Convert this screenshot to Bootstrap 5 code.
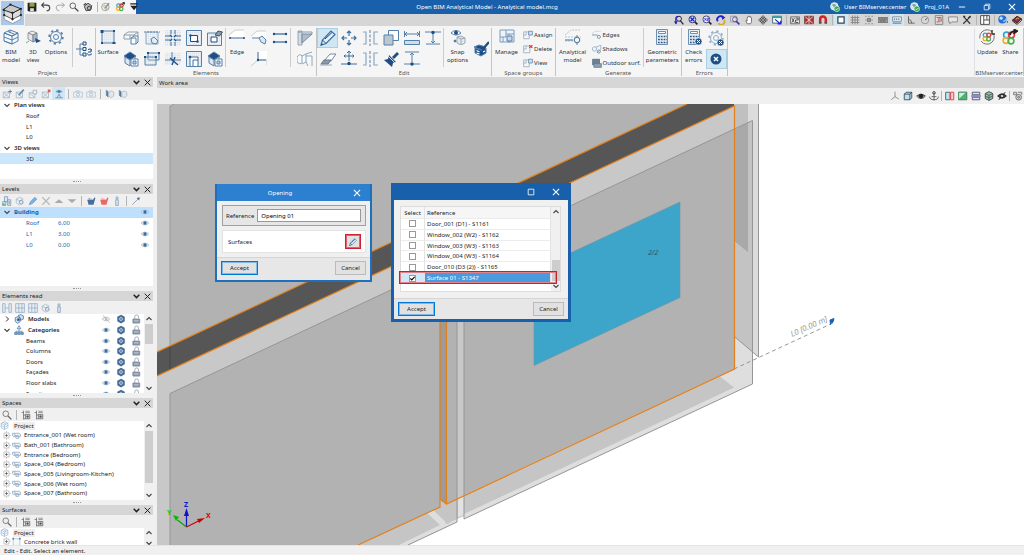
<!DOCTYPE html>
<html lang="en">
<head>
<meta charset="utf-8">
<meta name="viewport" content="width=device-width, initial-scale=1">
<title>Open BIM Analytical Model</title>
<link href="https://cdn.jsdelivr.net/npm/bootstrap@5.3.0/dist/css/bootstrap.min.css" rel="stylesheet">
<style>
:root{--blue:#185fac;--ink:#5580ab;--bar:#d6d6d6;--soft:#f0f0f0}
body{font:6px/8px "Noto Sans","Open Sans",sans-serif;color:#1c1c1c;background:var(--soft);overflow:hidden}
button{font:inherit;color:inherit;background:none;border:0;padding:0}
svg.ic{width:16px;height:16px;fill:none;stroke:var(--ink);stroke-width:1;flex:none;display:block}
svg.sm{width:10px;height:10px;stroke-width:1.5}
.app-btn{width:23px;height:24px;margin:1px;background:#a9c8ec}
.titlebar{height:14px;background:var(--blue);color:#fff}
.quick{width:111px;background:#f4f4f4;padding-right:1px}
.topbar{height:12px;background:var(--bar)}
.ib{display:flex;align-items:center;justify-content:center;flex:none;width:14px;height:12px}
.ib.on,.tool.on{background:#cfe6f3}
.vr-line{width:4px;flex:none;align-self:stretch;background:linear-gradient(#b4b4b4,#b4b4b4) center/1px 10px no-repeat}
.win{width:25px}
.ribbon{height:51px;background:#f5f5f5;color:#333}
.grp{border-right:1px solid #c4c4c4;margin:2px 0 1px}
.grp-body{height:41px}
.grp-name{height:8px;text-align:center;color:#555;white-space:nowrap}
.big{display:flex;flex-direction:column;align-items:center;text-align:center;height:40px;padding-top:1px;flex:none;white-space:nowrap}
.big svg{margin-bottom:3px}
.tool{display:flex;align-items:center;justify-content:center;width:21px;height:20px;flex:none}
.tool.on{outline:1px solid #a9cfe4;outline-offset:-1px}
.tools{display:grid;grid-auto-rows:21px;align-content:start}
.t6{grid-template-columns:repeat(6,21px)}.t5{grid-template-columns:repeat(5,21px)}
.t2{grid-template-columns:repeat(2,21px)}.t1{grid-template-columns:21px}
.cut{width:1px;background:#ccc;height:39px;flex:none}
.w20{width:20px}.w22{width:22px}.w24{width:24px}.w27{width:27px}.w29{width:29px}.w34{width:34px}.w37{width:37px}
.lines{padding:0 2px;white-space:nowrap}
.lines button{display:flex;align-items:center;gap:1px;height:14px}
.lines svg.sm,.side svg.sm{stroke-width:1.2}
.side{width:153px;margin-right:4px;background:var(--soft)}
.phead{height:10px;background:var(--bar);padding-left:2px}
.phead h2,.work-head h2{font:inherit;margin:0}
.phead .ib{width:11px;height:10px}
.phead .ib svg.sm{width:9px;height:9px}
.ptools{height:13px}
.ptools .ib{width:13px;height:13px}
.ptools .vr-line{width:6px}
.ptools svg.sm{opacity:.8}
.tree{background:#fff;overflow:hidden}
.rows{display:grid;grid-auto-rows:1fr}
.rows>div{display:flex;align-items:center;white-space:nowrap;min-height:0}
.views-rows{height:64px}.level-rows{height:43px}.elem-rows{height:85px}.space-rows{height:77px}.surf-rows{height:18px}
.h-panel{height:79px}
.twist{width:14px;display:flex;justify-content:center;flex:none}
.twist svg.sm{width:8px;height:8px}
.row-on{background:#cce6fc}.row-bld{background:#bfe0fd}
.leaf{padding-left:26px}
.num{width:32px}
.grip{height:5px;display:flex;align-items:center;justify-content:center}
.grip::after{content:"";width:8px;border-top:1px dotted #999}
.eyes{display:flex;gap:5px;margin-left:auto;padding-right:3px}
.sp{padding-left:2px;gap:3px}.sp svg:first-child{margin-right:-2px}
.space-rows svg.sm,.surf-rows svg.sm{width:9px;height:9px}
.sbar{width:9px;background:var(--soft);display:flex;flex-direction:column;align-items:center;flex:none}
.sbar svg.sm{width:8px;height:8px;margin:1px 0}
.thumb{width:8px;background:#cdcdcd}
.proj-name{background:#eee;padding:0 1px}
.bx{color:var(--blue)}
.work-head{height:11px;background:var(--bar);padding-left:2px}
.work-tools{height:16px}
.work-tools .ib{width:13px}
.work-tools .vr-line{width:3px}
.canvas{background:#fff;overflow:hidden;position:relative}
.scene{position:absolute;inset:0;width:100%;height:100%}
.status{height:10px;padding-left:4px;border-top:1px solid #e4e4e4}
.dlg{position:absolute;border:solid var(--frame);border-width:0 3px 3px;background:var(--soft);display:flex;flex-direction:column}
.dlg-open{--frame:#1f6fbd;left:58px;top:80px;width:157px;height:98px;border-width:0 2px 2px}
.dlg-pick{--frame:#185fac;left:234px;top:79px;width:180px;height:139px}
.dlg-title{height:17px;color:#fff;flex:none}
.dlg-open .dlg-title{background:#2d7fcf}
.dlg-pick .dlg-title{background:#185fac}
.dlg-foot{background:#e7e7e7;border-top:1px solid #d5d5d5;padding:3px 4px 0}
.dbtn{height:14px;width:31px;background:#e1e1e1;border:1px solid #bbb}
.dbtn.ok{width:37px;border:1px solid #0078d7;outline:1px solid #7fb8ea;outline-offset:-2px}
.refbox{height:21px;border:1px solid #a0a0a0;background:#e6e6e6;margin:4px 4px 4px 5px;padding:0 4px 0 3px;gap:3px}
.refbox input{height:13px;width:105px;border:1px solid #999;border-radius:0;background:#fff;font:inherit;padding:0 3px;min-height:0}
.surfbox{height:23px;background:#fff;border:1px solid #e3e3e3;margin:0 4px 4px 5px;padding:0 4px 0 5px}
.redbtn{width:16px;height:15px;border:1px solid #d0202e;outline:1px solid #e4606a;outline-offset:-2px;background:#e1e1e1;display:flex;align-items:center;justify-content:center}
.redbtn svg.sm{width:8px;height:8px}
.listbox{height:86px;margin:6px 7px 6px 6px;border:1px solid #ddd;background:#fff;position:relative}
.pick{width:151px;margin:0;align-self:flex-start;line-height:8px;border-collapse:separate;border-spacing:0;height:77px}
.pick th{font-weight:400;background:#f6f6f6;height:12px}
.pick th,.pick td{padding:0 2px;border-right:1px solid #e2e2e2;border-bottom:1px solid #ececec;white-space:nowrap}
.pick th:first-child,.pick td:first-child{width:24px;text-align:center}
.pick .sel td{background:#4a9ae0;color:#fff}
.pick .sel td:first-child{background:#cfe7fb}
.pick input{appearance:none;width:7px;height:7px;border:1px solid #999;background:#fff;display:block;margin:0 auto}
.pick input:checked{background:#fff url("data:image/svg+xml,%3Csvg xmlns='http://www.w3.org/2000/svg' viewBox='0 0 7 7'%3E%3Cpath d='M1 3.5 2.7 5.2 6 1.5' fill='none' stroke='%23000' stroke-width='1.4'/%3E%3C/svg%3E") center/6px}
.mark-red{position:absolute;left:-2px;right:3px;top:64px;height:13px;border:1px solid #c9202e;outline:1px solid #e58088;outline-offset:-2px;pointer-events:none}
</style>
</head>
<body class="vh-100 d-flex flex-column">

<svg width="0" height="0" class="position-absolute" aria-hidden="true">
<defs>
<pattern id="grid" width="2" height="2" patternUnits="userSpaceOnUse"><path d="M0 0h2M0 0v2" stroke="#c3d3e4" stroke-width=".6"/></pattern>
<symbol id="app" viewBox="0 0 22 22"><path d="M3 13v4l8 4 8-4v-4l-8 3z" fill="#fff" stroke="#777" stroke-width=".6"/><path d="M3 7v6l8 4 8-4V7l-8 4z" fill="#ddd" stroke="#333" stroke-width=".7"/><path d="M2 8 9 3l10 4-8 4z" fill="#c8c8c8" stroke="#222" stroke-width=".9"/><path d="M11 11v6" stroke="#333"/><g fill="#222" stroke="none"><circle cx="2.500" cy="8" r="1.100"/><circle cx="9" cy="3" r="1.100"/><circle cx="19" cy="7" r="1.100"/><circle cx="11" cy="11" r="1.100"/><circle cx="3" cy="13" r="1.100"/><circle cx="11" cy="17" r="1.100"/><circle cx="19" cy="13" r="1.100"/></g></symbol>
<symbol id="save" viewBox="0 0 16 16"><path d="M1 1h14v14H3l-2-2z" fill="#222" stroke="none"/><path d="M4 1.500h8v6H4z" fill="#9a9a3a" stroke="none"/><path d="M5 10h6v5H5z" fill="#ddd" stroke="none"/></symbol>
<symbol id="undo" viewBox="0 0 16 16"><path d="M5 1 1 5l4 4M1 5h8c4 0 5 2 5 4.500S12 14 9 14" stroke="#444" stroke-width="1.700"/></symbol>
<symbol id="redo" viewBox="0 0 16 16"><path d="m11 1 4 4-4 4M15 5H7C3 5 2 7 2 9.500S4 14 7 14" stroke="#999" stroke-width="1.400"/></symbol>
<symbol id="find" viewBox="0 0 16 16"><circle cx="6" cy="6" r="4.500" stroke="#555" stroke-width="1.400"/><path d="m9.500 9.500 5.500 5.500" stroke="#444" stroke-width="2.200"/></symbol>
<symbol id="print" viewBox="0 0 16 16"><path d="M2 7 8 2l6 4-2 7-7 1z" fill="#bbb" stroke="#444" stroke-width="1.500"/><circle cx="10" cy="10" r="3" stroke="#333" stroke-width="1.500"/><path d="M1 5l4-3" stroke="#444" stroke-width="2"/></symbol>
<symbol id="sync" viewBox="0 0 16 16"><circle cx="7" cy="8" r="6" stroke="#999" stroke-width="1.400"/><path d="m7 9 6-7" stroke="#888" stroke-width="2"/><circle cx="6" cy="7" r="1.800" stroke="#e96"/><circle cx="8" cy="10" r="1.800" stroke="#5b7"/></symbol>
<symbol id="rings" viewBox="0 0 16 16"><g stroke-width="2"><circle cx="5.500" cy="5.500" r="2.700" stroke="#2aa5d8"/><circle cx="10.500" cy="5.500" r="2.700" stroke="#e23b3b"/><circle cx="5" cy="10.500" r="2.700" stroke="#f2b01e"/><circle cx="10" cy="11" r="2.700" stroke="#4caf50"/></g><path d="m10 5 5-4M12 1h3v3" stroke="#222" stroke-width="1.500"/></symbol>
<symbol id="drop" viewBox="0 0 16 16"><path d="M2 3h12" stroke="#222" stroke-width="2"/><path d="M2 6h12l-6 7z" fill="#222" stroke="none"/></symbol>
<symbol id="user" viewBox="0 0 16 16"><circle cx="7" cy="7" r="6" fill="#d5e4ee" stroke="#eee"/><path d="M3 4q4-2 7 1l-3 4z" fill="#7aa" stroke="none"/><circle cx="11" cy="11" r="4.500" fill="#3faa54" stroke="#fff" stroke-width=".8"/><path d="m9 11 1.500 1.500 3-3" stroke="#fff" stroke-width="1.300"/></symbol>
<symbol id="min" viewBox="0 0 16 16"><path d="M3 8h10" stroke="#fff"/></symbol>
<symbol id="max" viewBox="0 0 16 16"><path d="M3.500 3.500h9v9h-9z" stroke="#fff" stroke-width="1.300"/></symbol>
<symbol id="restore" viewBox="0 0 16 16"><path d="M3.500 5.500h7v7h-7zM5.500 5V3.500h7v7H11" stroke="#fff" stroke-width="1.200"/></symbol>
<symbol id="close" viewBox="0 0 16 16"><path d="m3 3 10 10M13 3 3 13" stroke="currentColor" stroke-width="1.700"/></symbol>
<symbol id="chev" viewBox="0 0 16 16"><path d="m3 5 5 5 5-5" stroke="#222" stroke-width="2.600"/></symbol>
<symbol id="chevr" viewBox="0 0 16 16"><path d="m6 3 5 5-5 5" stroke="#333" stroke-width="2"/></symbol>
<symbol id="chevu" viewBox="0 0 16 16"><path d="m3 10 5-5 5 5" stroke="#444" stroke-width="2.200"/></symbol>
<symbol id="chevd" viewBox="0 0 16 16"><path d="m3 6 5 5 5-5" stroke="#444" stroke-width="2.200"/></symbol>

<symbol id="zprev" viewBox="0 0 16 16"><circle cx="8" cy="6" r="4" stroke="#223" stroke-width="1.500"/><path d="m10 9 5 6" stroke="#223" stroke-width="2"/><path d="M3 14V5q0-3 4-3" stroke="#22c" stroke-width="2"/><path d="M0 10h6l-3 5z" fill="#22c" stroke="none"/></symbol>
<symbol id="zfit" viewBox="0 0 16 16"><circle cx="7" cy="7" r="5.500" fill="#cdf" stroke="#336" stroke-width="1.500"/><path d="M4 4l6 6M10 4l-6 6" stroke="#22c" stroke-width="2"/><path d="m11 11 4 4" stroke="#223" stroke-width="2.500"/></symbol>
<symbol id="zx2" viewBox="0 0 16 16"><circle cx="7" cy="7" r="5.500" fill="#eef" stroke="#446" stroke-width="1.500"/><path d="m4 5 3 4M7 5 4 9M8.500 5h2v2h-2v2h2" stroke="#33c"/><path d="m11 11 4 4" stroke="#223" stroke-width="2.500"/></symbol>
<symbol id="redraw" viewBox="0 0 16 16"><path d="M3 10a5 5 0 0 1 8-6" stroke="#22c" stroke-width="3"/><path d="M9 0l6 4-5 4z" fill="#22c" stroke="none"/><path d="M13 8a5 5 0 0 1-9 5" stroke="#e0a820" stroke-width="3"/></symbol>
<symbol id="zwin" viewBox="0 0 16 16"><path d="M1 2h9v9H1z" fill="#dde" stroke="#99a"/><circle cx="8" cy="7" r="4" stroke="#557" stroke-width="1.400"/><path d="m10 10 5 5" stroke="#33a" stroke-width="2.500"/></symbol>
<symbol id="hand" viewBox="0 0 16 16"><path d="M5 14 3 9l2 .5V4l1.500-.5V2h2v1l2-.5V4l1.500.5V11l-1.500 3z" fill="#fff" stroke="#555" stroke-width="1.200"/></symbol>
<symbol id="orbit" viewBox="0 0 16 16"><path d="m8 1 3 3H9v3h3V5l3 3-3 3V9H9v3h2l-3 3-3-3h2V9H4v2L1 8l3-3v2h3V4H5z" fill="#eee" stroke="#444"/></symbol>
<symbol id="swap" viewBox="0 0 16 16"><path d="M1 2h14v11H1z" fill="#fff" stroke="#466"/><path d="M1 2h14v3H1z" fill="#2aa" stroke="none"/><path d="m5 7 8 7M9 14h5V9" stroke="#22c" stroke-width="2"/></symbol>
<symbol id="dxf" viewBox="0 0 16 16"><path d="M1 3h14v11H1z" fill="#eee" stroke="#555" stroke-width="1.300"/><path d="m3 5 4 7m0-7-4 7m6-7h4v3H9v4h4" stroke="#333" stroke-width="1.300"/></symbol>
<symbol id="layer" viewBox="0 0 16 16"><path d="M1 2h14v12H1z" fill="#a33" stroke="#744"/><path d="m2 3 12 10M14 3 2 13M8 2v12" stroke="#ecc" stroke-width="1.500"/></symbol>
<symbol id="magnet" viewBox="0 0 16 16"><path d="M3.500 13V7a4.500 4.500 0 0 1 9 0v6" stroke="#d1232a" stroke-width="4"/><path d="M1.500 11h4v3h-4zM10.500 11h4v3h-4z" fill="#555" stroke="none"/></symbol>
<symbol id="box" viewBox="0 0 16 16"><path d="M3 3h10v10H3z" fill="#fff" stroke="#345" stroke-width="2"/></symbol>
<symbol id="mesh" viewBox="0 0 16 16"><path d="M1 4h14M1 8h14M1 12h14M4 1v14M8 1v14M12 1v14" stroke="#888"/></symbol>
<symbol id="snapg" viewBox="0 0 16 16"><path d="M2 2h2M7 2h2M12 2h2M2 8h2M12 8h2M2 14h2M7 14h2M12 14h2" stroke="#777" stroke-width="1.500"/><path d="M5.500 5.500h5v5h-5z" fill="#999" stroke="#777"/></symbol>
<symbol id="kbd" viewBox="0 0 16 16"><path d="M0 4h16v8H0z" fill="#999" stroke="#777"/><path d="M2 6.500h12M3 9.500h10" stroke="#444" stroke-dasharray="1.500 1"/></symbol>
<symbol id="dims" viewBox="0 0 16 16"><path d="M1 3h14v7H1z" fill="#fff" stroke="#789"/><path d="M3 6.500h10" stroke="#567" stroke-width="2" stroke-dasharray="2 1"/><path d="M1 13h14" stroke="#567"/></symbol>
<symbol id="angle" viewBox="0 0 16 16"><path d="M4 2v11h10M4 7q5 0 5 6" stroke="#666" stroke-width="1.500"/></symbol>
<symbol id="clock" viewBox="0 0 16 16"><circle cx="8" cy="8" r="6" stroke="#888" stroke-width="1.200"/><path d="M8 8l4-3" stroke="#555" stroke-width="1.500"/></symbol>
<symbol id="sheet" viewBox="0 0 16 16"><path d="M2 1h12v14H2z" fill="#ddd" stroke="#888"/><path d="M4 4h8M4 11h5" stroke="#777"/><path d="M7 6h5v4H7z" fill="#e9a48c" stroke="#c77"/></symbol>
<symbol id="bubble" viewBox="0 0 16 16"><path d="M1 3h14v8H6l-3 3v-3H1z" fill="#e6e6e6" stroke="#777" stroke-width="1.200"/></symbol>
<symbol id="wrench" viewBox="0 0 16 16"><path d="m2 14 9-9M3 3l10 11" stroke="#333" stroke-width="1.800"/><path d="M10 5l4-3M2 2l3 1" stroke="#333" stroke-width="2.600"/></symbol>
<symbol id="layout" viewBox="0 0 16 16"><path d="M1 1h14v14H1zM6 1v14M6 8h9M11 1v7" fill="#fff" stroke="#333" stroke-width="1.300"/></symbol>
<symbol id="globe" viewBox="0 0 16 16"><circle cx="7" cy="7" r="6.500" fill="#2470d8" stroke="none"/><circle cx="5" cy="5" r="2.500" fill="#bde3ff" stroke="none"/><path d="M8 10q4 0 5-4" stroke="#7cc4ff" stroke-width="2"/><circle cx="15" cy="11" r="1" fill="#222" stroke="none"/></symbol>
<symbol id="book" viewBox="0 0 16 16"><path d="m1 8 7-6 7 4-7 7z" fill="#7b2a6b" stroke="#421"/><path d="m1 8 7 5 7-7v3l-7 6-7-5z" fill="#eee" stroke="#421"/><path d="m6 7 3-2 2 1" stroke="#f4c542" stroke-width="1.500"/></symbol>

<symbol id="bim" viewBox="0 0 16 16"><path d="M1 4 7 1l8 3-6 3zM9 7v8M1 4v8l8 3 6-3V4" fill="#f3f8fc"/><path d="M1 4 9 7l6-3M1 8l8 3 6-3M1 12l8 3M5 2.500l7 3M7 1v3" /></symbol>
<symbol id="v3d" viewBox="0 0 16 16"><path d="m3 4 4-2 5 2-4 2z" fill="#eee" stroke="#999"/><path d="M3 4v6l5 3V6z" fill="#e1e6ea" stroke="#999"/><path d="M8 6v7l4-2V4z" fill="#a9b8c8" stroke="#789"/><path d="m10 9 6 3-5 2z" fill="#1d4f86" stroke="none"/><path d="m1 14 3-2" stroke="#7a9"/></symbol>
<symbol id="gear" viewBox="0 0 16 16"><circle cx="8" cy="8" r="6.800" stroke-width="1.800" stroke-dasharray="2.300 3.040"/><circle cx="8" cy="8" r="5.500"/><circle cx="8" cy="8" r="2.500"/></symbol>
<symbol id="flow" viewBox="0 0 16 16"><path d="M0 8h4M4 3v11M4 3h3M4 8h3M4 14h3"/><path d="M7 1h3v3H7zM7 6.500h3v3H7zM7 12h3v3H7z" stroke="#1d4f86"/><path d="M12 8.500a3 3 0 1 1-1 4M15 8v3h-3" stroke="#1d4f86"/></symbol>
<symbol id="surf" viewBox="0 0 16 16"><path d="M2 2h12v12H2z" fill="url(#grid)"/><g fill="#1d4f86" stroke="none"><path d="M.5 1h3v3h-3zM13 1h2v2h-2zM1 13h2v2H1zM12.500 13h3v2h-3z"/></g></symbol>
<symbol id="slab" viewBox="0 0 16 16"><path d="M1 5 5 2h10l-4 3zM1 5v4h6V5M11 5v3l4-2V2" fill="#f8f8f8" stroke="#8b9bab"/><path d="M8 8h5v6H8zM8 8l3-2h4v6l-2 2" fill="#fff"/></symbol>
<symbol id="house" viewBox="0 0 16 16"><path d="M1 5 7 1l6 4-6 4z" fill="#1d4f86"/><path d="M2 6v6l5 3V9zM12 6v4" fill="#dfe8f0"/><path d="M8 8h7v7H8z" fill="#fff"/><path d="M10 10h3v3h-3z" fill="#b9cfe4"/></symbol>
<symbol id="gpen" viewBox="0 0 16 16"><path d="M2 2h12v12H2z" fill="url(#grid)" stroke="#8ba7c2"/><path d="M0 2h16" stroke-dasharray="2 1"/><path d="m7 9 3-2 4 4-2 3-4-1z" fill="#e4edf5"/></symbol>
<symbol id="gcopy" viewBox="0 0 16 16"><path d="M4 2h11v7H4z" fill="url(#grid)"/><path d="M1 6h11v8H1z" fill="url(#grid)"/><g fill="#1d4f86" stroke="none"><path d="M3 1h2v2H3zM14 1h2v2h-2zM0 5h2v2H0zM11 5h2v2h-2z"/></g></symbol>
<symbol id="gmeet" viewBox="0 0 16 16"><path d="M0 0h16v16H0z" fill="url(#grid)" stroke="none"/><path d="M0 6h5M11 6h5M0 10h5M11 10h5M6 0v4M10 0v4M6 12v4M10 12v4" stroke="#3f6f9f"/><path d="m5 5 2 2M11 5 9 7M5 11l2-2M11 11 9 9" stroke="#1d4f86" stroke-width="1.400"/></symbol>
<symbol id="gcut" viewBox="0 0 16 16"><path d="M0 2h16v12H0z" fill="url(#grid)" stroke="none"/><path d="M0 9h16M7 1v8" /><path d="m5 7 8 7M10 6l-3 8" stroke="#1d4f86" stroke-width="1.300"/></symbol>
<symbol id="ghole" viewBox="0 0 16 16"><path d="M.5.5h15v15H.5z" fill="url(#grid)"/><path d="M4.500 5.500h7v6h-7z" fill="#fff" stroke="#1d4f86"/><g fill="#1d4f86" stroke="none"><circle cx="4.500" cy="5.500" r="1.200"/><circle cx="11.500" cy="11.500" r="1.200"/></g></symbol>
<symbol id="gdoor" viewBox="0 0 16 16"><path d="M.5.5h15v15H.5z" fill="url(#grid)"/><path d="M4 15V6h8v9M7 15V9h5" fill="#fff" stroke="#3f6f9f"/><circle cx="4" cy="6" r="1.300" fill="#1d4f86" stroke="none"/></symbol>
<symbol id="gerase" viewBox="0 0 16 16"><path d="M.5 3h14v12.500H.5z" fill="url(#grid)"/><path d="M4 7h6v5H4z" fill="#fff" stroke="#1d4f86"/><path d="m8 5 3-4 4.500 1-3 4z" fill="#8d9cab" stroke="#456"/></symbol>
<symbol id="edge" viewBox="0 0 16 16"><path d="M1 9V6l6-5h8v8" fill="#fff" stroke="none"/><path d="m0 6 6-5h9" stroke="#ccc"/><path d="M1 9h14" stroke="#3f6f9f"/><circle cx="1" cy="9" r="1" fill="#1d4f86" stroke="none"/><circle cx="15" cy="9" r="1" fill="#1d4f86" stroke="none"/></symbol>
<symbol id="edgeed" viewBox="0 0 16 16"><path d="M1 9V6l6-5h8v8" fill="#fff" stroke="none"/><path d="m0 6 6-5h9" stroke="#ccc"/><path d="M1 8h8"/><path d="m8 8 3-2 4 4-1 4-4-2z" fill="#dbe7f2"/></symbol>
<symbol id="edges2" viewBox="0 0 16 16"><path d="M8 0h8v8H8z" fill="#fff" stroke="none"/><path d="m0 15 7-6M7 9h9v5" stroke="#ccc"/><path d="M7 1v8h8" stroke="#3f6f9f"/><circle cx="7" cy="9" r="1.200" fill="#1d4f86" stroke="none"/></symbol>
<symbol id="para" viewBox="0 0 16 16"><path d="M2 4h12M2 12h12" stroke-width="1.300"/><g fill="#1d4f86" stroke="none"><circle cx="2" cy="4" r="1.200"/><circle cx="14" cy="4" r="1.200"/><circle cx="2" cy="12" r="1.200"/><circle cx="14" cy="12" r="1.200"/></g></symbol>
<symbol id="brack" viewBox="0 0 16 16"><path d="M1 1h4v14H1z" fill="#d3dae2" stroke="#9aa7b5"/><path d="M5 4h10L5 13z" fill="#aebccb" stroke="#7389a0"/><path d="M1 2h14v2" stroke="#8796a6"/></symbol>
<symbol id="duct" viewBox="0 0 16 16"><path d="M0 6q3-4 5-1v7q-3 2-5-1zM5 5l4-2v8l-4 2M9 3l6-2M9 11l2 4M9 5h6v10" fill="#fafafa" stroke="#8ba7c2"/></symbol>
<symbol id="pencil" viewBox="0 0 16 16"><path d="m1 15 1.500-5L11 1l4 3.500-9 9z" fill="#e6eef5" stroke="#3f6f9f" stroke-width="1.200"/><path d="m2.500 10 3.500 3.500M5 9l7-6.500M1 15l2-1" stroke="#1d4f86"/></symbol>
<symbol id="eraser" viewBox="0 0 16 16"><path d="m4 10 6-7h6l-5 7z" fill="#fff" stroke="#7389a0"/><path d="m1 13 3-4h7l-3 4z" fill="#8d9cab" stroke="#5e7892"/><path d="M0 14h12" stroke="#9ab"/></symbol>
<symbol id="move" viewBox="0 0 16 16"><path d="M8 1v5M8 10v5M1 8h5M10 8h5M6 3l2-2 2 2M6 13l2 2 2-2M3 6 1 8l2 2M13 6l2 2-2 2" stroke="#3f6f9f" stroke-width="1.200"/></symbol>
<symbol id="movev" viewBox="0 0 16 16"><path d="M8 0v10M3 5h10M6 2l2-2 2 2M4.500 3.500 3 5l1.500 1.500M11.500 3.500 13 5l-1.500 1.500M0 13h16" stroke="#3f6f9f"/><circle cx="8" cy="12.500" r="1.700" fill="#1d4f86" stroke="none"/></symbol>
<symbol id="mirror" viewBox="0 0 16 16"><path d="M1 2h3v12H1M16 2h-4v12h4" stroke="#8ba7c2" stroke-width="1.200"/><path d="M8 0v16" stroke-dasharray="3 1.500"/></symbol>
<symbol id="copy" viewBox="0 0 16 16"><path d="M5.500.5h10v10h-10z" fill="#fff"/><path d="M1 5h9v10H1z" fill="#bcc6d0"/></symbol>
<symbol id="brush" viewBox="0 0 16 16"><path d="m9 6 5-5 2 2-5 5z" fill="#1d4f86" stroke="none"/><path d="m6 4 7 7-3 1-1 4-8-7 4-1z" fill="#1d4f86" stroke="none"/><path d="m5 5 7 7" stroke="#dde"/></symbol>
<symbol id="stretch" viewBox="0 0 16 16"><path d="M.5 1v6M15.500 1v6M1 4h14M3 2 1 4l2 2M13 2l2 2-2 2"/><path d="M.5 10.500h15v4H.5z" fill="#d3dde7"/></symbol>
<symbol id="height" viewBox="0 0 16 16"><path d="M0 2h16M1 14h14M8 4v9M6 11l2 2 2-2"/><circle cx="8" cy="2.500" r="1.700" fill="#1d4f86" stroke="none"/></symbol>
<symbol id="height2" viewBox="0 0 16 16"><path d="M1 1h14M0 13h16M8 2v9M6 4l2-2 2 2"/><circle cx="8" cy="13" r="1.700" fill="#1d4f86" stroke="none"/></symbol>
<symbol id="snap" viewBox="0 0 16 16"><path d="M1 4q5-5 10 0-5 4-10 0z" fill="#fff"/><circle cx="6" cy="3.700" r="2" fill="#1d4f86" stroke="none"/><path d="M7 8l4-1 4 2v5l-4 2-4-2zM7 8l4 2v6M15 9l-4 1" fill="#e5e9ed" stroke="#9aa7b5"/><circle cx="5" cy="12" r="1" fill="#1d4f86"/></symbol>
<symbol id="wand" viewBox="0 0 16 16"><path d="M1 6l5-2 7 2-4 3zM2 7v5l6 3 5-3V7L8 9z" fill="#1d4f86"/><path d="m9 9 7-8" stroke="#1d4f86" stroke-width="2.200"/><path d="M3.500 9.500l3 1.500M10 11l2-1M3.500 12l3 1" stroke="#fff" stroke-width="1.300"/></symbol>
<symbol id="manage" viewBox="0 0 16 16"><path d="M1 1h14v12H1zM7 1v7H1M7 5h8M10 5v9M4 8v5" fill="#edf3f8" stroke="#7d9bb8"/><path d="M8 7h5v5H8z" fill="#c9d9e8"/></symbol>
<symbol id="sg" viewBox="0 0 16 16"><path d="M1 3h9v11H1zM5 3v5H1" stroke="#8ba7c2"/><path d="M9 2h6v6H9z" fill="#d7e4f0"/></symbol>
<symbol id="sgdel" viewBox="0 0 16 16"><path d="M1 3h10v11H1zM5 3v5H1" stroke="#8ba7c2"/><path d="m10 2 5 4m0-4-5 4" stroke="#e33" stroke-width="2"/></symbol>
<symbol id="anal" viewBox="0 0 16 16"><path d="m0 6 6-5h9M0 8h16M0 12h8" stroke="#b5c4d3" stroke-dasharray="2 1"/><path d="M0 11h8" stroke="#3f6f9f"/><circle cx="12" cy="11" r="2.800" stroke="#3f6f9f"/><path d="M12 6v2M12 14v2"/></symbol>
<symbol id="gedge" viewBox="0 0 16 16"><path d="M0 6 5 2h9" stroke="#ccc"/><path d="M0 8h9"/><circle cx="11" cy="11" r="2.500"/></symbol>
<symbol id="gshad" viewBox="0 0 16 16"><circle cx="4" cy="8" r="3.500" stroke="#8ba7c2"/><path d="m6 5 8-3v7l-6 5" stroke="#8ba7c2"/><circle cx="11" cy="12" r="2.500"/></symbol>
<symbol id="gout" viewBox="0 0 16 16"><path d="M1 2h11v9H1z" fill="#6a8097" stroke="#567"/><path d="M3 9h12v6H3z" fill="#8ba0b5" stroke="#678"/></symbol>
<symbol id="calc" viewBox="0 0 16 16"><path d="M2.500.5h11v15h-11z" fill="#e7eef5" stroke="#6f8fae"/><path d="M4.500 2.500h7v2h-7z" fill="#fff" stroke="#6f8fae"/><path d="M4 7.500h9M4 10.500h9M4 13.500h9" stroke="#2d5a8a" stroke-width="1.500" stroke-dasharray="1.800 1"/></symbol>
<symbol id="calcx" viewBox="0 0 16 16"><use href="#calc"/><circle cx="12.500" cy="12.500" r="3.500" fill="#1d4f86" stroke="#fff" stroke-width=".6"/><path d="m11 11 3 3m0-3-3 3" stroke="#fff"/></symbol>
<symbol id="gearx" viewBox="0 0 16 16"><use href="#gear" opacity=".6"/><circle cx="12.500" cy="12.500" r="3.500" fill="#1d4f86" stroke="#fff" stroke-width=".6"/><path d="m11 11 3 3m0-3-3 3" stroke="#fff"/></symbol>
<symbol id="errx" viewBox="0 0 16 16"><circle cx="8" cy="8" r="5.500" fill="#1d4f86" stroke="none"/><path d="m6 6 4 4m0-4-4 4" stroke="#fff" stroke-width="1.500"/></symbol>
<symbol id="update" viewBox="0 0 16 16"><circle cx="8" cy="8" r="7.200" stroke="#777" stroke-dasharray="18 3"/><path d="M13 1v4h3" stroke="#333" stroke-width="1.400"/><g stroke-width="1.300"><circle cx="6.200" cy="6" r="1.900" stroke="#2aa5d8"/><circle cx="9.800" cy="6" r="1.900" stroke="#e23b3b"/><circle cx="6" cy="9.800" r="1.900" stroke="#f2b01e"/><circle cx="9.600" cy="10" r="1.900" stroke="#4caf50"/></g></symbol>
<symbol id="share" viewBox="0 0 16 16"><g stroke-width="1.600"><circle cx="4.500" cy="6" r="2.900" stroke="#2aa5d8"/><circle cx="9.500" cy="6" r="2.900" stroke="#e23b3b"/><circle cx="4" cy="11.500" r="2.900" stroke="#f2b01e"/><circle cx="9" cy="12" r="2.900" stroke="#4caf50"/></g><path d="M8 6q1-4 5-4" stroke="#222" stroke-width="1.700"/><path d="m12 0 4 2-4 3z" fill="#222" stroke="#222"/></symbol>

<symbol id="nplus" viewBox="0 0 16 16"><path d="M2 5h10v9H2zM2 5l10 9M2 14l10-9" stroke="#8ba7c2"/><path d="M13 1v6M10 4h6" stroke="#1d4f86"/></symbol>
<symbol id="nedit" viewBox="0 0 16 16"><path d="M2 5h10v9H2zM2 5l10 9" stroke="#8ba7c2"/><path d="m6 10 8-9" stroke="#3f6f9f" stroke-width="2.600"/></symbol>
<symbol id="ncopy" viewBox="0 0 16 16"><path d="M2 6h9v8H2zM2 6l9 8" stroke="#8ba7c2"/><path d="M8 2h6v6H8z" fill="#e6eef6" stroke="#7d9bb8"/></symbol>
<symbol id="ndel" viewBox="0 0 16 16"><path d="M2 5h10v9H2zM2 5l10 9M2 14l10-9" stroke="#8ba7c2"/><path d="m11 1 4 4m0-4-4 4" stroke="#e22" stroke-width="2"/></symbol>
<symbol id="neye" viewBox="0 0 16 16"><path d="M2 14h12M5 14l3-6 3 6M3 4q5-4 10 0-5 4-10 0" stroke="#3f6f9f"/><circle cx="8" cy="4" r="2" fill="#1d4f86"/></symbol>
<symbol id="cam" viewBox="0 0 16 16"><path d="M1 5h14v8H1zM5 5V3h5v2" fill="#eef3f8" stroke="#9ab5cf"/><circle cx="8" cy="9" r="2.500" stroke="#8ba7c2"/></symbol>
<symbol id="cube2" viewBox="0 0 16 16"><path d="M2 2v8l3 3V4z" fill="#1d4f86"/><path d="m6 5 4-2 4 2v6l-4 3-4-3z" fill="#dfe5ea" stroke="#9aa7b5"/></symbol>
<symbol id="bld" viewBox="0 0 16 16"><path d="M4 1h5v8H4zM1 9h5v6H1zM9 6h5v9H9z" fill="#dbe5ee"/><path d="M11.500 8v5M3 11v3" stroke="#3f6f9f"/><path d="M0 14h6" stroke="#4a9" stroke-width="2"/></symbol>
<symbol id="bpen" viewBox="0 0 16 16"><path d="m2 14 2-5 7-7 3 3-7 7z" fill="#5aa7e8" stroke="#3c86cf"/></symbol>
<symbol id="gx" viewBox="0 0 16 16"><path d="m2 2 12 12M14 2 2 14" stroke="#aaa" stroke-width="1.800"/></symbol>
<symbol id="up" viewBox="0 0 16 16"><path d="m1 11 7-6 7 6z" fill="#999" stroke="none"/></symbol>
<symbol id="down" viewBox="0 0 16 16"><path d="m1 5 7 6 7-6z" fill="#999" stroke="none"/></symbol>
<symbol id="pick-b" viewBox="0 0 16 16"><path d="M2 6h9l3-4 1 1-3 11H4z" fill="#1d4f86" stroke="none"/><path d="M5 3v3M8 4v2" stroke="#1d4f86"/></symbol>
<symbol id="pick-r" viewBox="0 0 16 16"><path d="M2 6h9l3-4 1 1-3 11H4z" fill="#e84848" stroke="none"/><path d="M5 3v3M8 4v2" stroke="#e84848"/></symbol>
<symbol id="info" viewBox="0 0 16 16"><path d="M6 6h4v9H6z" fill="#dce8f3"/><circle cx="8" cy="3" r="1.800"/></symbol>
<symbol id="arr" viewBox="0 0 16 16"><path d="m2 14 9-9" stroke="#678"/><path d="m9 3 5-1-1 5z" fill="#1d4f86" stroke="none"/></symbol>
<symbol id="eye" viewBox="0 0 16 16"><path d="M2 8q6-6 12 0-6 6-12 0z" fill="#fff" stroke="#8ba7c2"/><circle cx="8" cy="8" r="2.800" fill="#3a6b9e" stroke="none"/></symbol>
<symbol id="eyeoff" viewBox="0 0 16 16"><path d="M2 8q6-6 12 0-6 6-12 0zM3 2l11 12" stroke="#aaa"/><circle cx="8" cy="8" r="2.200" fill="#bbb" stroke="none"/></symbol>
<symbol id="hex" viewBox="0 0 16 16"><path d="m8 1 6 3.500v7L8 15l-6-3.500v-7z" fill="#436b94" stroke="none"/><circle cx="8" cy="8" r="2.500" stroke="#c4d3e2" stroke-width="1.200"/><path d="M8 4v8M4 8h8" stroke="#a9bfd5" stroke-width=".8"/></symbol>
<symbol id="lock" viewBox="0 0 16 16"><path d="M3 8h11v6.500H3z" fill="#8b97a5" stroke="#7b8a9a"/><path d="M6 8V4.500a3 3 0 0 1 6 0V7" stroke="#8b97a5"/><path d="M5 11h7" stroke="#dde"/></symbol>
<symbol id="cols" viewBox="0 0 16 16"><path d="M1 1h4v14H1zM11 1h4v14h-4zM5 8h6" fill="#dce8f3" stroke="#7d9bb8"/></symbol>
<symbol id="cols2" viewBox="0 0 16 16"><path d="M1 1h14v14H1zM6 1v14M1 8h14M11 1v14" fill="#e6eef6" stroke="#7d9bb8"/></symbol>
<symbol id="searchc" viewBox="0 0 16 16"><path d="m2 5 5-3 6 3-5 3zM2 5v6l6 4" stroke="#8ba7c2"/><circle cx="10" cy="10" r="3" fill="#dce8f3" stroke="#3f6f9f"/></symbol>
<symbol id="model" viewBox="0 0 16 16"><path d="M2 6l4-2 4 2v6l-4 3-4-3zM7 2l4-1 4 2v5l-4 2z" fill="#d5e1ec" stroke="#3f6f9f"/><circle cx="7" cy="9" r="2" fill="#1d4f86"/></symbol>
<symbol id="cats" viewBox="0 0 16 16"><path d="M8 1 5 6h6zM8 6v4M3 12v-2h10v2" fill="#dce8f3"/><path d="M1 12h4v3H1zM6 12h4v3H6zM11 12h4v3h-4z" fill="#7ea4c8"/></symbol>
<symbol id="expand" viewBox="0 0 16 16"><path d="M4 1v14M1 4h3M4 8h3M4 14h3" stroke="#444"/><path d="M7 2h7M7 4h7" stroke="#666"/><path d="M7 7h7v7H7z" fill="#bbb" stroke="#444"/><path d="M8.500 10.500h4M10.500 8.500v4" stroke="#222"/></symbol>
<symbol id="proj" viewBox="0 0 16 16"><path d="m2 4 6-3 6 3v8l-6 3-6-3zM2 4l6 3 6-3M8 7v8M5 2.500l6 3M2 8l6 3 6-3" stroke="#8fb2cf" stroke-width="1.200"/></symbol>
<symbol id="plus" viewBox="0 0 16 16"><path d="M3.500 3.500h9v9h-9z" fill="#fff" stroke="#aaa"/><path d="M5.500 8h5M8 5.500v5" stroke="#444"/><path d="M8 0v3M8 13v3M13 8h3" stroke="#bbb"/></symbol>
<symbol id="room" viewBox="0 0 16 16"><path d="M1 4h12l2 2v4H3L1 8zM5 4v4h7" fill="#eaf2f9" stroke="#7d9bb8"/><path d="M7 10v3h5v-3" stroke="#7d9bb8"/></symbol>
<symbol id="wall" viewBox="0 0 16 16"><path d="M2 3h12v12H2z" fill="#f4f8fb" stroke="#9ab5cf"/><path d="M1 3h2M13 3h2" stroke="#1d4f86" stroke-width="3"/></symbol>

<symbol id="ucs" viewBox="0 0 16 16"><path d="M8 1v8L2 14M8 9l6 4" stroke="#678" stroke-width="1.200"/></symbol>
<symbol id="cubeb" viewBox="0 0 16 16"><path d="M2 5h9v9H2zM2 5l3-3h9v9l-3 3M11 5l3-3" fill="#bfe0ee" stroke="#234" stroke-width="1.200"/></symbol>
<symbol id="orb" viewBox="0 0 16 16"><path d="M1 8q7-5 14 0M1 8q3 4 7 4t7-4" stroke="#444"/><path d="m8 4 4 2v4l-4 2-4-2V6z" fill="#222" stroke="none"/></symbol>
<symbol id="anch" viewBox="0 0 16 16"><path d="M8 4v11M1 9q0 5 7 5t7-5M4 9h8" stroke="#444" stroke-width="1.200"/><circle cx="8" cy="3" r="2" stroke="#333"/></symbol>
<symbol id="c1" viewBox="0 0 16 16"><path d="M1 2h7v12H1z" fill="#bfe0ee" stroke="#567"/><path d="M9 2h5v12H9z" fill="#fcc" stroke="#d44"/></symbol>
<symbol id="c2" viewBox="0 0 16 16"><path d="M1 2h13v12H1z" fill="#3fbf5f" stroke="#567"/><path d="M1 2h13L1 14z" fill="#cdeedd" stroke="#496"/></symbol>
<symbol id="c3" viewBox="0 0 16 16"><path d="M2 2h12v4H2zM2 10h12v4H2z" fill="#e0e6f0" stroke="#557"/><path d="M0 8h16" stroke="#44a" stroke-width="1.500"/></symbol>
<symbol id="c4" viewBox="0 0 16 16"><path d="m2 4 6-3 6 3v8l-6 3-6-3z" fill="#9bb" stroke="#444"/><path d="m2 4 6 3 6-3M8 7v8M2 8l6 3 6-3" stroke="#464"/></symbol>
<symbol id="c5" viewBox="0 0 16 16"><path d="M1 8q7-7 14 0-7 7-14 0z" fill="#444" stroke="#222"/><path d="M3 14 13 2" stroke="#111" stroke-width="1.600"/><circle cx="8" cy="8" r="1.600" fill="#fff" stroke="none"/></symbol>
<symbol id="c6" viewBox="0 0 16 16"><path d="M1 2h5v4H1zM8 2h6v4" stroke="#777" fill="#ddd"/><circle cx="9" cy="10" r="4.500" fill="#ddd" stroke="#666"/><circle cx="9" cy="10" r="1.500" stroke="#666"/></symbol>
</defs>
</svg>

<header class="d-flex flex-shrink-0">
  <button class="app-btn d-flex align-items-center justify-content-center flex-shrink-0" aria-label="Application menu"><svg class="ic w-100 h-100"><use href="#app"/></svg></button>
  <div class="flex-grow-1">
    <div class="titlebar d-flex align-items-center">
      <div class="quick d-flex align-items-center h-100 flex-shrink-0">
        <button class="ib" aria-label="Save"><svg class="ic sm"><use href="#save"/></svg></button>
        <button class="ib" aria-label="Undo"><svg class="ic sm"><use href="#undo"/></svg></button>
        <button class="ib" aria-label="Redo"><svg class="ic sm"><use href="#redo"/></svg></button>
        <button class="ib" aria-label="Search"><svg class="ic sm"><use href="#find"/></svg></button>
        <button class="ib" aria-label="Print"><svg class="ic sm"><use href="#print"/></svg></button>
        <span class="vr-line ms-auto"></span>
        <button class="ib" aria-label="Sync"><svg class="ic sm"><use href="#sync"/></svg></button>
        <button class="ib" aria-label="Share project"><svg class="ic sm"><use href="#rings"/></svg></button>
        <button class="ib" style="" aria-label="More"><svg class="ic sm"><use href="#drop"/></svg></button>
      </div>
      <div class="flex-grow-1 text-center ps-2">Open BIM Analytical Model - Analytical model.mcg</div>
      <div class="d-flex align-items-center gap-1 text-nowrap"><svg class="ic sm"><use href="#user"/></svg><span>User BIMserver.center</span><svg class="ic sm"><use href="#user"/></svg><span>Proj_01A</span></div>
      <button class="ib win" aria-label="Minimize"><svg class="ic sm"><use href="#min"/></svg></button>
      <button class="ib win" aria-label="Restore"><svg class="ic sm"><use href="#restore"/></svg></button>
      <button class="ib win" aria-label="Close"><svg class="ic sm"><use href="#close"/></svg></button>
    </div>
    <div class="topbar d-flex align-items-center justify-content-end">
      <button class="ib" aria-label="Previous view"><svg class="ic sm"><use href="#zprev"/></svg></button>
      <button class="ib" aria-label="Zoom all"><svg class="ic sm"><use href="#zfit"/></svg></button>
      <button class="ib" aria-label="Zoom x2"><svg class="ic sm"><use href="#zx2"/></svg></button>
      <button class="ib" aria-label="Redraw"><svg class="ic sm"><use href="#redraw"/></svg></button>
      <button class="ib" aria-label="Zoom window"><svg class="ic sm"><use href="#zwin"/></svg></button>
      <button class="ib" aria-label="Pan"><svg class="ic sm"><use href="#hand"/></svg></button>
      <button class="ib" aria-label="Orbit"><svg class="ic sm"><use href="#orbit"/></svg></button>
      <button class="ib" aria-label="Switch window"><svg class="ic sm"><use href="#swap"/></svg></button>
      <span class="vr-line"></span>
      <button class="ib" aria-label="DXF templates"><svg class="ic sm"><use href="#dxf"/></svg></button>
      <button class="ib" aria-label="Layers"><svg class="ic sm"><use href="#layer"/></svg></button>
      <button class="ib" aria-label="Object snap"><svg class="ic sm"><use href="#magnet"/></svg></button>
      <span class="vr-line"></span>
      <button class="ib on" aria-label="Frame"><svg class="ic sm"><use href="#box"/></svg></button>
      <button class="ib" aria-label="Grid"><svg class="ic sm"><use href="#mesh"/></svg></button>
      <button class="ib" aria-label="Grid snap"><svg class="ic sm"><use href="#snapg"/></svg></button>
      <button class="ib" aria-label="Keyboard"><svg class="ic sm"><use href="#kbd"/></svg></button>
      <button class="ib on" aria-label="Dimensions"><svg class="ic sm"><use href="#dims"/></svg></button>
      <button class="ib" aria-label="Orthogonal"><svg class="ic sm"><use href="#angle"/></svg></button>
      <button class="ib" aria-label="Angle"><svg class="ic sm"><use href="#clock"/></svg></button>
      <button class="ib" aria-label="Sheet"><svg class="ic sm"><use href="#sheet"/></svg></button>
      <button class="ib" aria-label="Comment"><svg class="ic sm"><use href="#bubble"/></svg></button>
      <button class="ib" aria-label="Tools"><svg class="ic sm"><use href="#wrench"/></svg></button>
      <span class="vr-line"></span>
      <button class="ib" aria-label="Layout"><svg class="ic sm"><use href="#layout"/></svg></button>
      <span class="vr-line"></span>
      <button class="ib" aria-label="Web"><svg class="ic sm"><use href="#globe"/></svg></button>
      <button class="ib" aria-label="Help"><svg class="ic sm"><use href="#book"/></svg></button>
    </div>
  </div>
</header>

<section class="ribbon d-flex flex-shrink-0">
  <div class="grp">
    <div class="grp-body d-flex">
      <button class="big w22"><svg class="ic"><use href="#bim"/></svg>BIM<br>model</button>
      <button class="big w22"><svg class="ic"><use href="#v3d"/></svg>3D<br>view</button>
      <button class="big w24"><svg class="ic"><use href="#gear"/></svg>Options</button>
      <span class="cut ms-1"></span>
      <button class="tool w22 h-100" aria-label="Structure"><svg class="ic"><use href="#flow"/></svg></button>
    </div>
    <div class="grp-name">Project</div>
  </div>
  <div class="grp">
    <div class="grp-body d-flex">
      <button class="big w24"><svg class="ic"><use href="#surf"/></svg>Surface</button>
      <div class="tools t5">
        <button class="tool" aria-label="Slab"><svg class="ic"><use href="#slab"/></svg></button>
        <button class="tool" aria-label="Edit surface"><svg class="ic"><use href="#gpen"/></svg></button>
        <button class="tool" aria-label="Join"><svg class="ic"><use href="#gmeet"/></svg></button>
        <button class="tool" aria-label="Opening"><svg class="ic"><use href="#ghole"/></svg></button>
        <button class="tool" aria-label="Delete opening"><svg class="ic"><use href="#gerase"/></svg></button>
        <button class="tool" aria-label="Building"><svg class="ic"><use href="#house"/></svg></button>
        <button class="tool" aria-label="Copy surface"><svg class="ic"><use href="#gcopy"/></svg></button>
        <button class="tool" aria-label="Split"><svg class="ic"><use href="#gcut"/></svg></button>
        <button class="tool" aria-label="Door"><svg class="ic"><use href="#gdoor"/></svg></button>
        <button class="tool" aria-label="Building opening"><svg class="ic"><use href="#house"/></svg></button>
      </div>
      <span class="cut"></span>
      <button class="big w22"><svg class="ic"><use href="#edge"/></svg>Edge</button>
      <div class="tools t2">
        <button class="tool" aria-label="Edit edge"><svg class="ic"><use href="#edgeed"/></svg></button>
        <button class="tool" aria-label="Parallel edges"><svg class="ic"><use href="#para"/></svg></button>
        <button class="tool" aria-label="Corner edge"><svg class="ic"><use href="#edges2"/></svg></button>
      </div>
      <span class="cut"></span>
      <div class="tools t1 ps-1">
        <button class="tool w20" aria-label="Bracket"><svg class="ic"><use href="#brack"/></svg></button>
        <button class="tool w20" aria-label="Duct"><svg class="ic"><use href="#duct"/></svg></button>
      </div>
    </div>
    <div class="grp-name">Elements</div>
  </div>
  <div class="grp">
    <div class="grp-body d-flex">
      <div class="tools t6">
        <button class="tool on" aria-label="Edit"><svg class="ic"><use href="#pencil"/></svg></button>
        <button class="tool" aria-label="Move"><svg class="ic"><use href="#move"/></svg></button>
        <button class="tool" aria-label="Mirror"><svg class="ic"><use href="#mirror"/></svg></button>
        <button class="tool" aria-label="Copy"><svg class="ic"><use href="#copy"/></svg></button>
        <button class="tool" aria-label="Stretch"><svg class="ic"><use href="#stretch"/></svg></button>
        <button class="tool" aria-label="Lower"><svg class="ic"><use href="#height"/></svg></button>
        <button class="tool" aria-label="Erase"><svg class="ic"><use href="#eraser"/></svg></button>
        <button class="tool" aria-label="Move node"><svg class="ic"><use href="#movev"/></svg></button>
        <button class="tool" aria-label="Mirror copy"><svg class="ic"><use href="#mirror"/></svg></button>
        <button class="tool" aria-label="Match properties"><svg class="ic"><use href="#brush"/></svg></button>
        <button class="tool" aria-label="Raise"><svg class="ic"><use href="#height2"/></svg></button>
      </div>
      <span class="cut"></span>
      <button class="big w27"><svg class="ic"><use href="#snap"/></svg>Snap<br>options</button>
      <button class="tool w20 h-100" aria-label="Wizard"><svg class="ic"><use href="#wand"/></svg></button>
    </div>
    <div class="grp-name">Edit</div>
  </div>
  <div class="grp">
    <div class="grp-body d-flex">
      <button class="big w29"><svg class="ic"><use href="#manage"/></svg>Manage</button>
      <div class="lines">
        <button><svg class="ic sm"><use href="#sg"/></svg>Assign</button>
        <button><svg class="ic sm"><use href="#sgdel"/></svg>Delete</button>
        <button><svg class="ic sm"><use href="#sg"/></svg>View</button>
      </div>
    </div>
    <div class="grp-name">Space groups</div>
  </div>
  <div class="grp">
    <div class="grp-body d-flex">
      <button class="big w34"><svg class="ic"><use href="#anal"/></svg>Analytical<br>model</button>
      <div class="lines">
        <button><svg class="ic sm"><use href="#gedge"/></svg>Edges</button>
        <button><svg class="ic sm"><use href="#gshad"/></svg>Shadows</button>
        <button><svg class="ic sm"><use href="#gout"/></svg>Outdoor surf.</button>
      </div>
      <span class="cut"></span>
      <button class="big w37"><svg class="ic"><use href="#calc"/></svg>Geometric<br>parameters</button>
    </div>
    <div class="grp-name">Generate</div>
  </div>
  <div class="grp">
    <div class="grp-body d-flex">
      <button class="big w24"><svg class="ic"><use href="#calcx"/></svg>Check<br>errors</button>
      <div class="tools t1">
        <button class="tool" aria-label="Error settings"><svg class="ic"><use href="#gearx"/></svg></button>
        <button class="tool on" aria-label="Show errors"><svg class="ic"><use href="#errx"/></svg></button>
      </div>
    </div>
    <div class="grp-name">Errors</div>
  </div>
  <div class="grp ms-auto border-start">
    <div class="grp-body d-flex">
      <button class="big w24"><svg class="ic"><use href="#update"/></svg>Update</button>
      <button class="big w22"><svg class="ic"><use href="#share"/></svg>Share</button>
    </div>
    <div class="grp-name">BIMserver.center</div>
  </div>
</section>

<main class="d-flex flex-grow-1 overflow-hidden">
  <aside class="side d-flex flex-column flex-shrink-0">
    <div class="phead d-flex align-items-center flex-shrink-0"><h2 class="me-auto">Views</h2><button class="ib" aria-label="Collapse"><svg class="ic sm"><use href="#chev"/></svg></button><button class="ib" aria-label="Close"><svg class="ic sm"><use href="#close"/></svg></button></div>
    <div class="ptools d-flex align-items-center flex-shrink-0">
      <button class="ib" aria-label="New view"><svg class="ic sm"><use href="#nplus"/></svg></button>
      <button class="ib" aria-label="Edit view"><svg class="ic sm"><use href="#nedit"/></svg></button>
      <button class="ib" aria-label="Copy view"><svg class="ic sm"><use href="#ncopy"/></svg></button>
      <button class="ib" aria-label="Delete view"><svg class="ic sm"><use href="#ndel"/></svg></button>
      <button class="ib on" aria-label="Show view"><svg class="ic sm"><use href="#neye"/></svg></button>
      <span class="vr-line"></span>
      <button class="ib" aria-label="Camera"><svg class="ic sm"><use href="#cam"/></svg></button>
      <button class="ib" aria-label="Cameras"><svg class="ic sm"><use href="#cam"/></svg></button>
      <span class="vr-line"></span>
      <button class="ib" aria-label="Cube left"><svg class="ic sm"><use href="#cube2"/></svg></button>
      <button class="ib" aria-label="Cube right"><svg class="ic sm"><use href="#cube2"/></svg></button>
    </div>
    <div class="tree h-panel flex-shrink-0">
      <div class="rows views-rows">
        <div class="fw-semibold"><span class="twist"><svg class="ic sm"><use href="#chevd"/></svg></span>Plan views</div>
        <div class="leaf">Roof</div>
        <div class="leaf">L1</div>
        <div class="leaf">L0</div>
        <div class="fw-semibold"><span class="twist"><svg class="ic sm"><use href="#chevd"/></svg></span>3D views</div>
        <div class="leaf row-on">3D</div>
      </div>
    </div>
    <div class="grip flex-shrink-0"></div>
    <div class="phead d-flex align-items-center flex-shrink-0"><h2 class="me-auto">Levels</h2><button class="ib" aria-label="Collapse"><svg class="ic sm"><use href="#chev"/></svg></button><button class="ib" aria-label="Close"><svg class="ic sm"><use href="#close"/></svg></button></div>
    <div class="ptools d-flex align-items-center flex-shrink-0">
      <button class="ib" aria-label="New building"><svg class="ic sm"><use href="#bld"/></svg></button>
      <button class="ib" aria-label="New level"><svg class="ic sm"><use href="#searchc"/></svg></button>
      <button class="ib" aria-label="Edit level"><svg class="ic sm"><use href="#bpen"/></svg></button>
      <button class="ib" aria-label="Delete level"><svg class="ic sm"><use href="#gx"/></svg></button>
      <button class="ib" aria-label="Move up"><svg class="ic sm"><use href="#up"/></svg></button>
      <button class="ib" aria-label="Move down"><svg class="ic sm"><use href="#down"/></svg></button>
      <span class="vr-line"></span>
      <button class="ib" aria-label="Assign level"><svg class="ic sm"><use href="#pick-b"/></svg></button>
      <button class="ib" aria-label="Unassign level"><svg class="ic sm"><use href="#pick-r"/></svg></button>
      <button class="ib" aria-label="Information"><svg class="ic sm"><use href="#info"/></svg></button>
      <span class="vr-line"></span>
      <button class="ib" aria-label="Direction"><svg class="ic sm"><use href="#arr"/></svg></button>
    </div>
    <div class="tree h-panel flex-shrink-0">
      <div class="rows level-rows bx">
        <div class="fw-bold row-bld"><span class="twist"><svg class="ic sm"><use href="#chevd"/></svg></span>Building<span class="eyes"><svg class="ic sm"><use href="#eye"/></svg></span></div>
        <div class="leaf"><span class="num">Roof</span>6.00<span class="eyes"><svg class="ic sm"><use href="#eye"/></svg></span></div>
        <div class="leaf"><span class="num">L1</span>3.00<span class="eyes"><svg class="ic sm"><use href="#eye"/></svg></span></div>
        <div class="leaf"><span class="num">L0</span>0.00<span class="eyes"><svg class="ic sm"><use href="#eye"/></svg></span></div>
      </div>
    </div>
    <div class="grip flex-shrink-0"></div>
    <div class="phead d-flex align-items-center flex-shrink-0"><h2 class="me-auto">Elements read</h2><button class="ib" aria-label="Collapse"><svg class="ic sm"><use href="#chev"/></svg></button><button class="ib" aria-label="Close"><svg class="ic sm"><use href="#close"/></svg></button></div>
    <div class="ptools d-flex align-items-center flex-shrink-0">
      <button class="ib" aria-label="Columns"><svg class="ic sm"><use href="#cols"/></svg></button>
      <button class="ib" aria-label="Cells"><svg class="ic sm"><use href="#cols2"/></svg></button>
      <button class="ib" aria-label="Table"><svg class="ic sm"><use href="#cols2"/></svg></button>
      <button class="ib" aria-label="Find element"><svg class="ic sm"><use href="#searchc"/></svg></button>
      <button class="ib" aria-label="Information"><svg class="ic sm"><use href="#info"/></svg></button>
    </div>
    <div class="tree h-panel d-flex flex-shrink-0">
      <div class="rows elem-rows flex-grow-1">
        <div class="fw-semibold"><span class="twist"><svg class="ic sm"><use href="#chevr"/></svg></span><svg class="ic sm"><use href="#model"/></svg><span class="ps-1 ms-n1"></span>Models<span class="eyes"><svg class="ic sm"><use href="#eyeoff"/></svg><svg class="ic sm"><use href="#hex"/></svg><svg class="ic sm"><use href="#lock"/></svg></span></div>
        <div class="fw-semibold"><span class="twist"><svg class="ic sm"><use href="#chevd"/></svg></span><svg class="ic sm"><use href="#cats"/></svg><span class="ps-1 ms-n1"></span>Categories<span class="eyes"><svg class="ic sm"><use href="#eye"/></svg><svg class="ic sm"><use href="#hex"/></svg><svg class="ic sm"><use href="#lock"/></svg></span></div>
        <div class="leaf">Beams<span class="eyes"><svg class="ic sm"><use href="#eye"/></svg><svg class="ic sm"><use href="#hex"/></svg><svg class="ic sm"><use href="#lock"/></svg></span></div>
        <div class="leaf">Columns<span class="eyes"><svg class="ic sm"><use href="#eye"/></svg><svg class="ic sm"><use href="#hex"/></svg><svg class="ic sm"><use href="#lock"/></svg></span></div>
        <div class="leaf">Doors<span class="eyes"><svg class="ic sm"><use href="#eye"/></svg><svg class="ic sm"><use href="#hex"/></svg><svg class="ic sm"><use href="#lock"/></svg></span></div>
        <div class="leaf">Façades<span class="eyes"><svg class="ic sm"><use href="#eye"/></svg><svg class="ic sm"><use href="#hex"/></svg><svg class="ic sm"><use href="#lock"/></svg></span></div>
        <div class="leaf">Floor slabs<span class="eyes"><svg class="ic sm"><use href="#eye"/></svg><svg class="ic sm"><use href="#hex"/></svg><svg class="ic sm"><use href="#lock"/></svg></span></div>
        <div class="leaf">Furniture<span class="eyes"><svg class="ic sm"><use href="#eye"/></svg><svg class="ic sm"><use href="#hex"/></svg><svg class="ic sm"><use href="#lock"/></svg></span></div>
      </div>
      <div class="sbar"><svg class="ic sm"><use href="#chevu"/></svg><div class="thumb h-25"></div><div class="flex-grow-1"></div><svg class="ic sm"><use href="#chevd"/></svg></div>
    </div>
    <div class="grip flex-shrink-0"></div>
    <div class="phead d-flex align-items-center flex-shrink-0"><h2 class="me-auto">Spaces</h2><button class="ib" aria-label="Collapse"><svg class="ic sm"><use href="#chev"/></svg></button><button class="ib" aria-label="Close"><svg class="ic sm"><use href="#close"/></svg></button></div>
    <div class="ptools d-flex align-items-center flex-shrink-0">
      <button class="ib" aria-label="Find"><svg class="ic sm"><use href="#find"/></svg></button>
      <span class="vr-line"></span>
      <button class="ib" aria-label="Expand all"><svg class="ic sm"><use href="#expand"/></svg></button>
      <button class="ib" aria-label="Collapse all"><svg class="ic sm"><use href="#expand"/></svg></button>
    </div>
    <div class="tree h-panel d-flex flex-shrink-0">
      <div class="rows space-rows flex-grow-1">
        <div><svg class="ic sm me-1"><use href="#proj"/></svg><span class="proj-name">Project</span></div>
        <div class="sp"><svg class="ic sm"><use href="#plus"/></svg><svg class="ic sm"><use href="#room"/></svg>Entrance_001 (Wet room)</div>
        <div class="sp"><svg class="ic sm"><use href="#plus"/></svg><svg class="ic sm"><use href="#room"/></svg>Bath_001 (Bathroom)</div>
        <div class="sp"><svg class="ic sm"><use href="#plus"/></svg><svg class="ic sm"><use href="#room"/></svg>Entrance (Bedroom)</div>
        <div class="sp"><svg class="ic sm"><use href="#plus"/></svg><svg class="ic sm"><use href="#room"/></svg>Space_004 (Bedroom)</div>
        <div class="sp"><svg class="ic sm"><use href="#plus"/></svg><svg class="ic sm"><use href="#room"/></svg>Space_005 (Livingroom-Kitchen)</div>
        <div class="sp"><svg class="ic sm"><use href="#plus"/></svg><svg class="ic sm"><use href="#room"/></svg>Space_006 (Wet room)</div>
        <div class="sp"><svg class="ic sm"><use href="#plus"/></svg><svg class="ic sm"><use href="#room"/></svg>Space_007 (Bathroom)</div>
      </div>
      <div class="sbar"><svg class="ic sm"><use href="#chevu"/></svg><div class="thumb flex-grow-1"></div><svg class="ic sm mt-2"><use href="#chevd"/></svg></div>
    </div>
    <div class="grip flex-shrink-0"></div>
    <div class="phead d-flex align-items-center flex-shrink-0"><h2 class="me-auto">Surfaces</h2><button class="ib" aria-label="Collapse"><svg class="ic sm"><use href="#chev"/></svg></button><button class="ib" aria-label="Close"><svg class="ic sm"><use href="#close"/></svg></button></div>
    <div class="ptools d-flex align-items-center flex-shrink-0">
      <button class="ib" aria-label="Find"><svg class="ic sm"><use href="#find"/></svg></button>
      <span class="vr-line"></span>
      <button class="ib" aria-label="Expand all"><svg class="ic sm"><use href="#expand"/></svg></button>
      <button class="ib" aria-label="Collapse all"><svg class="ic sm"><use href="#expand"/></svg></button>
    </div>
    <div class="tree d-flex flex-grow-1">
      <div class="rows surf-rows flex-grow-1">
        <div><svg class="ic sm me-1"><use href="#proj"/></svg><span class="proj-name">Project</span></div>
        <div class="sp"><svg class="ic sm"><use href="#plus"/></svg><svg class="ic sm"><use href="#wall"/></svg>Concrete brick wall</div>
      </div>
      <div class="sbar justify-content-between"><svg class="ic sm"><use href="#chevu"/></svg><svg class="ic sm"><use href="#chevd"/></svg></div>
    </div>
  </aside>

  <section class="d-flex flex-column flex-grow-1">
    <div class="work-head d-flex align-items-center flex-shrink-0"><h2>Work area</h2></div>
    <div class="work-tools d-flex align-items-center justify-content-end flex-shrink-0">
      <button class="ib" aria-label="Axes"><svg class="ic sm"><use href="#ucs"/></svg></button>
      <button class="ib" aria-label="View cube"><svg class="ic sm"><use href="#cubeb"/></svg></button>
      <button class="ib" aria-label="Orbit"><svg class="ic sm"><use href="#orb"/></svg></button>
      <button class="ib" aria-label="Turntable"><svg class="ic sm"><use href="#anch"/></svg></button>
      <span class="vr-line"></span>
      <button class="ib" aria-label="Section"><svg class="ic sm"><use href="#c1"/></svg></button>
      <button class="ib" aria-label="Section plane"><svg class="ic sm"><use href="#c2"/></svg></button>
      <button class="ib" aria-label="Horizontal section"><svg class="ic sm"><use href="#c3"/></svg></button>
      <button class="ib" aria-label="Section box"><svg class="ic sm"><use href="#c4"/></svg></button>
      <button class="ib" aria-label="Hide elements"><svg class="ic sm"><use href="#c5"/></svg></button>
      <span class="vr-line"></span>
      <button class="ib" aria-label="View settings"><svg class="ic sm"><use href="#c6"/></svg></button>
    </div>
    <div class="canvas flex-grow-1">
      <svg class="scene" viewBox="157 104 867 441" preserveAspectRatio="xMinYMin slice">
        <path d="M157 104H735V369L408 545H157z" fill="#c8c8c8"/>
        <path d="M170 106.500 174 104H687L170 346z" fill="#b2b2b2"/>
        <path d="M170 106.500 174 104M170 106v240" stroke="#999" fill="none"/>
        <path d="M735 104h13v134h-13z" fill="#c0c0c0"/>
        <path d="M748 104h10.500v253L735 337V252h13z" fill="#dcdcdc"/>
        <path d="M735 129 752.500 120.500V384L464 519V440L735 369z" fill="#dedede"/>
        <path d="M735 129 748 122.500V252.500L735 242z" fill="#a9a9a9"/>
        <path d="M735 242 748 252.500V122.500L752.500 120.500V352L735 337z" fill="#c3c3c3"/>
        <path d="M464 495 720 376.500 734 387.500 464 514z" fill="#c5c5c5"/>
        <path d="M170 393.500 457 259V522L408 545H170z" fill="#c5c5c5"/>
        <path d="M427 513 440 525 399 545h9l49-23v-6L448 524 433 510z" fill="#dedede"/>
        <path d="M440 507l17-8v20l-11 5z" fill="#c5c5c5"/>
        <path d="M457 270h7v246l-7 3z" fill="#c8c8c8"/><path d="M458 498l6-3v20l-6 2z" fill="#e2e2e2"/>
        <path d="M170 393.500 440 266.700V507L358 545H170z" fill="#b2b2b2"/>
        <path d="M446 264l11-5V499l-11 5zM464 256 734 129V369L464 495z" fill="#b2b2b2"/>
        <path d="M440 266h6v238l-6-5z" fill="#9b9b9b"/>
        <path d="M157 352 687 104h47v2L157 376z" fill="#565656"/>
        <path d="M170 346v24" stroke="#444"/>
        <g fill="none" stroke="#969696">
          <path d="M170 545V393.500L752.500 120.500V384L464 519V300M457 300V522L408 545"/>
          <path d="M758.500 104V357L735 337"/>
          <path d="M734 369 833 323" stroke-dasharray="4 3"/>
        </g>
        <path d="M157 352 687 104M157 376 734.500 106V369L446.500 504V300M440 300V507L358 545M440 499l6.500 5" fill="none" stroke="#e2801c" stroke-width="1.200"/>
        <path d="M534 270 680 202V297.500L534 365.500z" fill="#3da5c9" stroke="#6b94a5" stroke-width=".6"/>
        <text x="648" y="255" font-size="7" fill="#22576c" font-style="italic">2/2</text>
        <text transform="translate(792 337) rotate(-24)" font-size="8" fill="#9b9b9b" font-style="italic">L0 [0.00 m]</text>
        <path d="m830 320 4-1.500-1 3.500-2 1-.5 1.500z" fill="#185fac" stroke="#185fac"/>
        <g stroke-width="1.200">
          <path d="M186.500 527V515" stroke="#11c"/><path d="m186.500 508 2.500 8h-5z" fill="#11c"/>
          <path d="m186.500 527-9-7" stroke="#0a0"/><path d="m173 515 6 2-3 4z" fill="#0b0"/>
          <path d="m186.500 527 12-6" stroke="#c00"/><path d="m205 518-6 5-2-4z" fill="#c00"/>
        </g>
        <g font-size="7" font-weight="700"><text x="184" y="507" fill="#11c">Z</text><text x="167" y="515" fill="#0c0">Y</text><text x="206" y="518" fill="#d00">X</text></g>
      </svg>

      <section class="dlg dlg-open" role="dialog" aria-label="Opening">
        <div class="dlg-title d-flex align-items-center"><span class="flex-grow-1 text-center">Opening</span><button class="ib w27" aria-label="Close"><svg class="ic sm"><use href="#close"/></svg></button></div>
        <div class="refbox d-flex align-items-center justify-content-between"><label for="ref">Reference</label><input id="ref" type="text" value="Opening 01"></div>
        <div class="surfbox d-flex align-items-center justify-content-between"><span>Surfaces</span><button class="redbtn" aria-label="Edit surfaces"><svg class="ic sm"><use href="#pencil"/></svg></button></div>
        <div class="dlg-foot d-flex justify-content-between flex-grow-1"><button class="dbtn ok">Accept</button><button class="dbtn">Cancel</button></div>
      </section>

      <section class="dlg dlg-pick" role="dialog" aria-label="Surfaces">
        <div class="dlg-title d-flex align-items-center justify-content-end"><button class="ib win" aria-label="Maximize"><svg class="ic sm"><use href="#max"/></svg></button><button class="ib win" aria-label="Close"><svg class="ic sm"><use href="#close"/></svg></button></div>
        <div class="listbox d-flex">
          <table class="pick">
            <thead><tr><th>Select</th><th>Reference</th></tr></thead>
            <tbody>
              <tr><td><input type="checkbox" aria-label="Door_001"></td><td>Door_001 (D1) - S1161</td></tr>
              <tr><td><input type="checkbox" aria-label="Window_002"></td><td>Window_002 (W2) - S1162</td></tr>
              <tr><td><input type="checkbox" aria-label="Window_003"></td><td>Window_003 (W3) - S1163</td></tr>
              <tr><td><input type="checkbox" aria-label="Window_004"></td><td>Window_004 (W3) - S1164</td></tr>
              <tr><td><input type="checkbox" aria-label="Door_010"></td><td>Door_010 (D3 (2)) - S1165</td></tr>
              <tr class="sel"><td><input type="checkbox" checked aria-label="Surface 01"></td><td>Surface 01 - S1347</td></tr>
            </tbody>
          </table>
          <div class="sbar flex-grow-1"><svg class="ic sm"><use href="#chevu"/></svg><div class="thumb mt-auto h-25"></div><svg class="ic sm"><use href="#chevd"/></svg></div>
          <div class="mark-red"></div>
        </div>
        <div class="dlg-foot d-flex justify-content-between flex-grow-1"><button class="dbtn ok">Accept</button><button class="dbtn">Cancel</button></div>
      </section>
    </div>
  </section>
</main>
<footer class="status d-flex align-items-center flex-shrink-0">Edit - Edit. Select an element.</footer>
<script src="https://cdn.jsdelivr.net/npm/bootstrap@5.3.0/dist/js/bootstrap.bundle.min.js"></script>
</body>
</html>
